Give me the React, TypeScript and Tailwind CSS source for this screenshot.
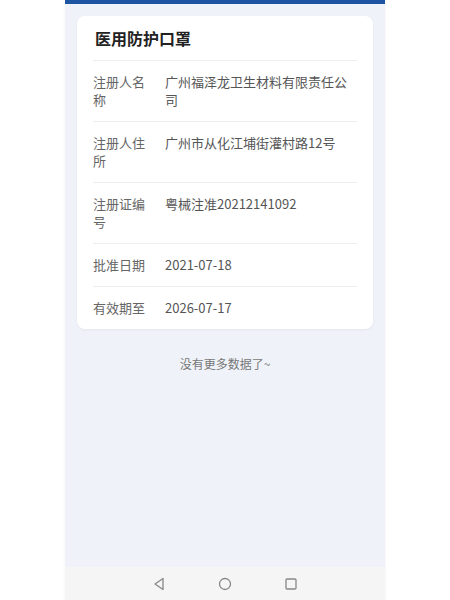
import React from "react";

const rows = [
  { label: "注册人名称", value: "广州福泽龙卫生材料有限责任公司" },
  { label: "注册人住所", value: "广州市从化江埔街灌村路12号" },
  { label: "注册证编号", value: "粤械注准20212141092" },
  { label: "批准日期", value: "2021-07-18" },
  { label: "有效期至", value: "2026-07-17" },
];

export default function App() {
  return (
    <div
      className="w-full h-[600px] bg-white flex justify-center overflow-hidden"
      style={{ fontFamily: '"Noto Sans CJK SC", "Noto Sans", sans-serif' }}
    >
      <div className="w-[320px] h-full flex flex-col bg-[#eff3f9] shadow-[0_0_3px_rgba(0,0,0,0.06)]">
        {/* top bar */}
        <div className="h-[4px] bg-[#1d55a2]" />

        <div className="flex-1 flex flex-col px-3 pt-3">
          {/* Card */}
          <div className="bg-white rounded-lg px-4 shadow-[0_1px_3px_rgba(0,0,0,0.05)]">
            <div className="h-[45px] flex items-center border-b border-[#eeeeee]">
              <h1 className="text-[16px] font-bold text-[#222] pl-[2px]">医用防护口罩</h1>
            </div>
            {rows.map((r, i) => (
              <div
                key={r.label}
                className={
                  i < rows.length - 1
                    ? "flex gap-[14px] py-3 border-b border-[#eeeeee] text-[13px] leading-[18px]"
                    : "flex gap-[14px] pt-3 pb-3 text-[13px] leading-[18px]"
                }
              >
                <div className="w-[58px] shrink-0 text-[#666]">{r.label}</div>
                <div className="flex-1 text-[#555]">{r.value}</div>
              </div>
            ))}
          </div>

          <p className="text-center text-[12px] text-[#777] mt-[26px]">没有更多数据了~</p>
        </div>

        {/* Android nav bar */}
        <div className="h-[33px] bg-[#f5f5f5] flex items-center justify-center gap-[52px] text-[#888]">
          <svg width="14" height="14" viewBox="0 0 14 14" fill="none" stroke="currentColor" strokeWidth="1.3">
            <path d="M11 1.5 L3 7 L11 12.5 Z" strokeLinejoin="round" />
          </svg>
          <svg width="14" height="14" viewBox="0 0 14 14" fill="none" stroke="currentColor" strokeWidth="1.3">
            <circle cx="7" cy="7" r="5.5" />
          </svg>
          <svg width="14" height="14" viewBox="0 0 14 14" fill="none" stroke="currentColor" strokeWidth="1.3">
            <rect x="2" y="2" width="10" height="10" rx="1" />
          </svg>
        </div>
      </div>
    </div>
  );
}
